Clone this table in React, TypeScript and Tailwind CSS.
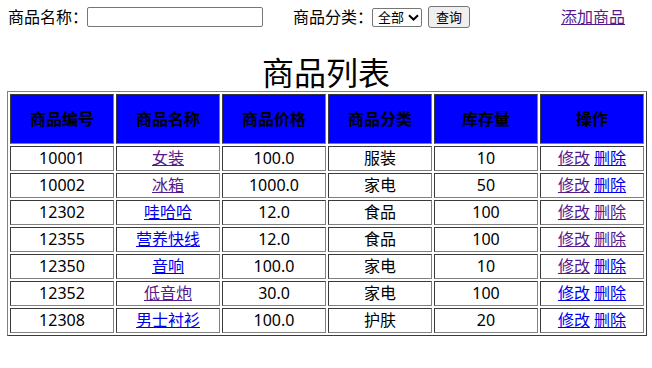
const PURPLE = "text-[#551a8b]";
const BLUE = "text-[#0000ee]";

type Row = {
  id: string;
  name: string;
  price: string;
  type: string;
  stock: string;
  nameSeen: boolean;
  editSeen: boolean;
  delSeen: boolean;
};

const rows: Row[] = [
  { id: "10001", name: "女装", price: "100.0", type: "服装", stock: "10", nameSeen: true, editSeen: true, delSeen: false },
  { id: "10002", name: "冰箱", price: "1000.0", type: "家电", stock: "50", nameSeen: true, editSeen: true, delSeen: false },
  { id: "12302", name: "哇哈哈", price: "12.0", type: "食品", stock: "100", nameSeen: false, editSeen: true, delSeen: true },
  { id: "12355", name: "营养快线", price: "12.0", type: "食品", stock: "100", nameSeen: false, editSeen: true, delSeen: true },
  { id: "12350", name: "音响", price: "100.0", type: "家电", stock: "10", nameSeen: false, editSeen: true, delSeen: false },
  { id: "12352", name: "低音炮", price: "30.0", type: "家电", stock: "100", nameSeen: true, editSeen: false, delSeen: false },
  { id: "12308", name: "男士衬衫", price: "100.0", type: "护肤", stock: "20", nameSeen: false, editSeen: false, delSeen: false },
];

const headers = ["商品编号", "商品名称", "商品价格", "商品分类", "库存量", "操作"];

// cells get the old inset look: dark top/left, light bottom/right
const cell =
  "border border-t-[#3a3a3a] border-l-[#3a3a3a] border-b-[#808080] border-r-[#808080] p-px text-center";

export default function App() {
  return (
    <div className="w-[652px] h-[368px] bg-white text-black text-[16px] font-['Noto_Sans','Noto_Sans_CJK_SC',sans-serif]">
      <form className="flex items-center h-[34px] pl-2" onSubmit={(e) => e.preventDefault()}>
        <span className="leading-[20px]">商品名称：</span>
        <input
          type="text"
          className="w-[176px] h-[20px] -ml-px border border-[#767676] rounded-[2px] px-1 text-[13px]"
        />
        <span className="ml-[30px] leading-[20px]">商品分类：</span>
        <div className="-ml-px flex items-center w-[50px] h-[19px] border border-[#767676] rounded-[2px] pl-[5px] text-[13px] leading-[17px]">
          <span>全部</span>
          <svg className="ml-[4px]" width="11" height="7" viewBox="0 0 11 7">
            <path d="M1 1.2 L5.5 5.5 L10 1.2" fill="none" stroke="#000" strokeWidth="2" />
          </svg>
        </div>
        <button
          type="submit"
          className="ml-[6px] w-[42px] h-[22px] bg-[#efefef] border border-[#767676] rounded-[3px] text-[13px] leading-[20px]"
        >
          查询
        </button>
        <a href="#" className={`ml-[91px] underline leading-[20px] ${PURPLE}`}>
          添加商品
        </a>
      </form>

      <h1 className="mt-[20px] text-center text-[32px] leading-[37px] font-normal">商品列表</h1>

      <table className="ml-[7px] w-[640px] table-fixed border-separate border-spacing-[2px] border border-t-[#808080] border-l-[#808080] border-b-[#3a3a3a] border-r-[#3a3a3a]">
        <thead>
          <tr>
            {headers.map((h) => (
              <th key={h} className={`${cell} h-[50px] bg-[#0000ff] font-bold leading-[21px]`}>
                {h}
              </th>
            ))}
          </tr>
        </thead>
        <tbody>
          {rows.map((r) => (
            <tr key={r.id}>
              <td className={`${cell} h-[25px] leading-[21px]`}>{r.id}</td>
              <td className={`${cell} h-[25px] leading-[21px]`}>
                <a href="#" className={`underline ${r.nameSeen ? PURPLE : BLUE}`}>
                  {r.name}
                </a>
              </td>
              <td className={`${cell} h-[25px] leading-[21px]`}>{r.price}</td>
              <td className={`${cell} h-[25px] leading-[21px]`}>{r.type}</td>
              <td className={`${cell} h-[25px] leading-[21px]`}>{r.stock}</td>
              <td className={`${cell} h-[25px] leading-[21px]`}>
                <a href="#" className={`underline ${r.editSeen ? PURPLE : BLUE}`}>
                  修改
                </a>{" "}
                <a href="#" className={`underline ${r.delSeen ? PURPLE : BLUE}`}>
                  删除
                </a>
              </td>
            </tr>
          ))}
        </tbody>
      </table>
    </div>
  );
}
